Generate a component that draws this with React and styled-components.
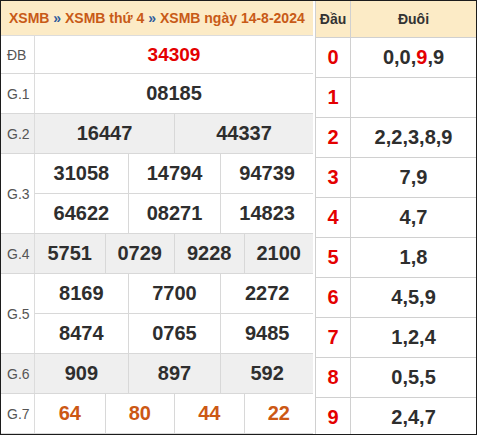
import styled, { createGlobalStyle } from "styled-components";

const GlobalStyle = createGlobalStyle`
  html, body {
    margin: 0;
    padding: 0;
    background: #fff;
  }
  body {
    font-family: "Liberation Sans", Arial, sans-serif;
  }
`;

const prizes = [
  { label: "ĐB", lines: [["34309"]], tone: "special", height: 37 },
  { label: "G.1", lines: [["08185"]] },
  { label: "G.2", lines: [["16447", "44337"]], shaded: true },
  {
    label: "G.3",
    lines: [
      ["31058", "14794", "94739"],
      ["64622", "08271", "14823"],
    ],
  },
  { label: "G.4", lines: [["5751", "0729", "9228", "2100"]], shaded: true },
  {
    label: "G.5",
    lines: [
      ["8169", "7700", "2272"],
      ["8474", "0765", "9485"],
    ],
  },
  { label: "G.6", lines: [["909", "897", "592"]], shaded: true },
  { label: "G.7", lines: [["64", "80", "44", "22"]], tone: "g7" },
];

// tails per head, hot = index of the digit from the special prize
const tails = [
  { digits: ["0", "0", "9", "9"], hot: 2 },
  { digits: [] },
  { digits: ["2", "2", "3", "8", "9"] },
  { digits: ["7", "9"] },
  { digits: ["4", "7"] },
  { digits: ["1", "8"] },
  { digits: ["4", "5", "9"] },
  { digits: ["1", "2", "4"] },
  { digits: ["0", "5", "5"] },
  { digits: ["2", "4", "7"] },
];

const App = () => {
  return (
    <>
      <GlobalStyle />
      <Frame>
        <Results>
          <ResultsHeader>
            <span>
              XSMB <Sep>»</Sep> XSMB thứ 4 <Sep>»</Sep> XSMB ngày 14-8-2024
            </span>
          </ResultsHeader>
          {prizes.map((p) => (
            <PrizeRow key={p.label} $shaded={p.shaded}>
              <PrizeLabel>{p.label}</PrizeLabel>
              <Lines>
                {p.lines.map((line, i) => (
                  <Line key={i} $cols={line.length} $h={p.height || 39}>
                    {line.map((num, j) => (
                      <NumCell key={j} $tone={p.tone}>
                        {num}
                      </NumCell>
                    ))}
                  </Line>
                ))}
              </Lines>
            </PrizeRow>
          ))}
        </Results>

        <LotoTable>
          <LotoHead>
            <HeadCell>Đầu</HeadCell>
            <TailHead>Đuôi</TailHead>
          </LotoHead>
          {tails.map((t, i) => (
            <LotoRow key={i}>
              <HeadNum>{i}</HeadNum>
              <TailCell>
                {t.digits.map((d, k) => (
                  <span key={k}>
                    {k > 0 && ","}
                    <Digit $hot={t.hot === k}>{d}</Digit>
                  </span>
                ))}
              </TailCell>
            </LotoRow>
          ))}
        </LotoTable>
      </Frame>
    </>
  );
};

const Frame = styled.div`
  width: 477px;
  height: 435px;
  box-sizing: border-box;
  border: 1px solid #1c1c1c;
  display: flex;
  gap: 2px;
  overflow: hidden;
  background: #fff;
`;

const Results = styled.div`
  width: 312px;
  flex: none;
  display: flex;
  flex-direction: column;
`;

const ResultsHeader = styled.div`
  height: 36px;
  box-sizing: border-box;
  border-bottom: 1px solid #dcdcdc;
  background: #fcebc6;
  display: flex;
  align-items: center;
  padding-left: 8px;
  font-size: 14px;
  font-weight: bold;
  color: #c85a17;
  white-space: nowrap;
`;

const Sep = styled.span`
  color: #2f5c9c;
`;

const PrizeRow = styled.div`
  display: flex;
  border-bottom: 1px solid #d8d8d8;
  background: ${(p) => (p.$shaded ? "#efefef" : "#fff")};
`;

const PrizeLabel = styled.div`
  width: 34px;
  flex: none;
  box-sizing: border-box;
  border-right: 1px solid #dcdcdc;
  display: flex;
  align-items: center;
  padding-left: 6px;
  font-size: 14px;
  color: #555;
`;

const Lines = styled.div`
  flex: 1;
  display: flex;
  flex-direction: column;
`;

const Line = styled.div`
  display: grid;
  grid-template-columns: repeat(${(p) => p.$cols}, 1fr);
  height: ${(p) => p.$h}px;

  & + & {
    border-top: 1px solid #d8d8d8;
  }
`;

const toneColor = {
  special: "#e40000",
  g7: "#cc5814",
};

const NumCell = styled.div`
  display: flex;
  align-items: center;
  justify-content: center;
  font-size: ${(p) => (p.$tone === "special" ? 19 : 20)}px;
  font-weight: bold;
  color: ${(p) => toneColor[p.$tone] || "#2e2e2e"};

  & + & {
    border-left: 1px solid #d8d8d8;
  }
`;

const LotoTable = styled.div`
  flex: 1;
  display: flex;
  flex-direction: column;
  border-left: 1px solid #d0d0d0;
`;

const LotoHead = styled.div`
  height: 37px;
  flex: none;
  box-sizing: border-box;
  display: flex;
  background: #fcebc6;
  border-bottom: 1px solid #d0d0d0;
  font-size: 14px;
  font-weight: bold;
  color: #333;
`;

const HeadCell = styled.div`
  width: 35px;
  flex: none;
  box-sizing: border-box;
  border-right: 1px solid #d0d0d0;
  display: flex;
  align-items: center;
  justify-content: center;
`;

const TailHead = styled.div`
  flex: 1;
  display: flex;
  align-items: center;
  justify-content: center;
`;

const LotoRow = styled.div`
  height: 40px;
  flex: none;
  box-sizing: border-box;
  display: flex;
  border-bottom: 1px solid #d0d0d0;
  font-size: 20px;
  font-weight: bold;
`;

const HeadNum = styled(HeadCell)`
  color: #e40000;
`;

const TailCell = styled.div`
  flex: 1;
  display: flex;
  align-items: center;
  justify-content: center;
  color: #2e2e2e;
`;

const Digit = styled.span`
  color: ${(p) => (p.$hot ? "#e40000" : "inherit")};
`;

export default App;
